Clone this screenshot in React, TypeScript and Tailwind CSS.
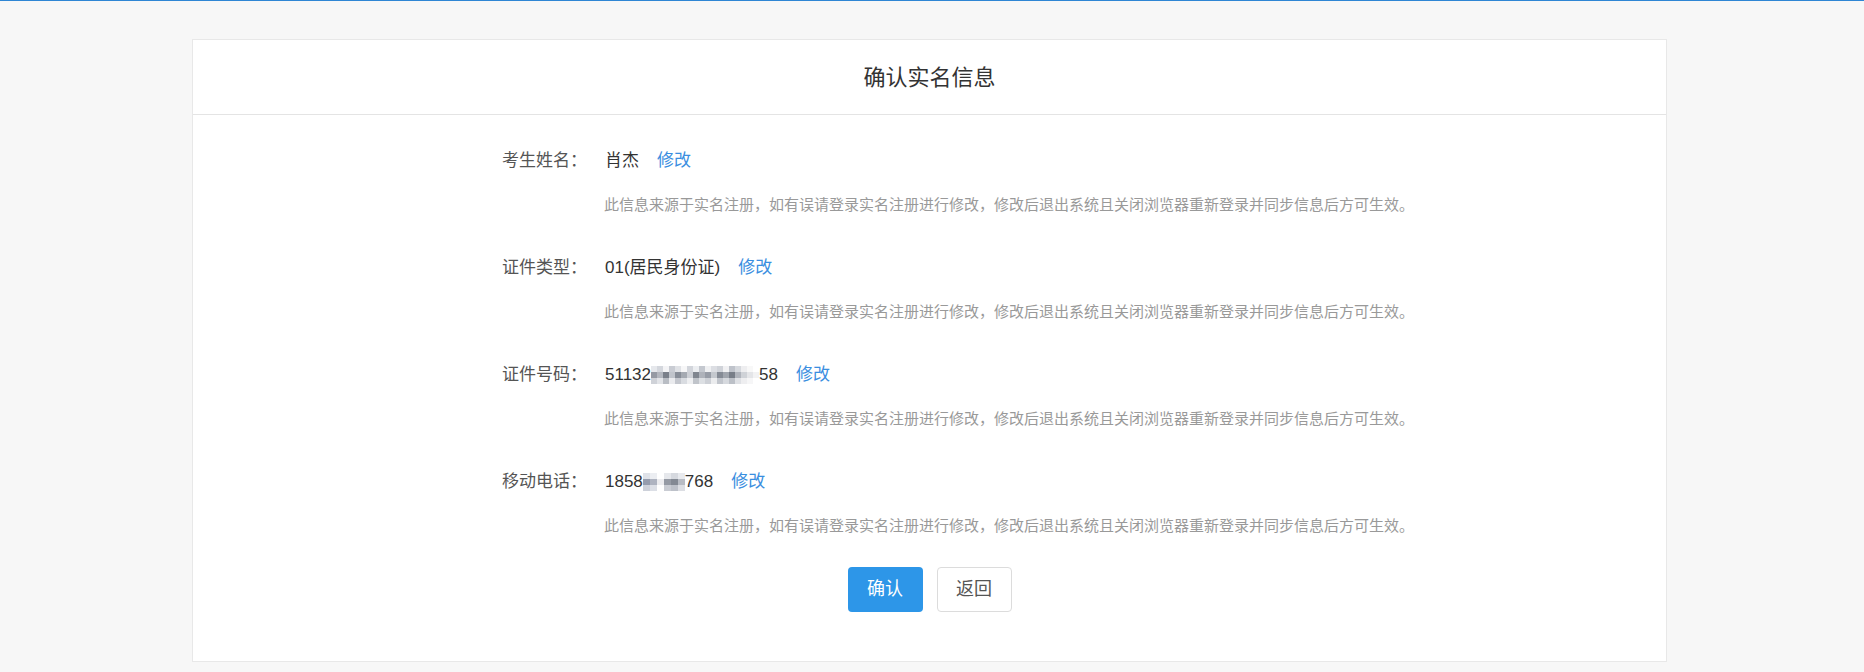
import React from "react";

const idMosaic: string[][] = [
  ["#e6e8ec", "#d4d7dd", "#f4f4f6", "#c9ccd3", "#e0e2e6", "#f7f7f8", "#d2d5db", "#eceef1", "#c4c8cf", "#eff0f2", "#dcdee3", "#d0d3d9", "#f1f1f3", "#bfc3cb", "#d6d9de", "#eeeef0", "#f8f8f8", "#ffffff"],
  ["#959aa4", "#b3b7bf", "#7a808a", "#c0c4cb", "#888e98", "#a5aab2", "#cdd0d6", "#80868f", "#aeb2ba", "#979ca6", "#c4c8ce", "#858b95", "#a0a5ad", "#787e88", "#b0b4bc", "#cfd2d7", "#e4e5e8", "#f2f2f3"],
  ["#cfd2d8", "#e2e4e8", "#b9bdc4", "#eaebee", "#c4c7ce", "#d9dce1", "#eeeff1", "#c0c4ca", "#dcdfe3", "#cdd0d6", "#ebecee", "#c1c5cc", "#d6d9de", "#bcc0c7", "#dfe1e5", "#eeeef0", "#f6f6f7", "#ffffff"],
];

const phoneMosaic: string[][] = [
  ["#dfe2e8", "#eceef2", "#ffffff", "#e6e8ec", "#d6d9df", "#e8eaee"],
  ["#959cad", "#aeb3c0", "#ececef", "#959aa4", "#838993", "#b8bcc4"],
  ["#cdd1da", "#dcdfe6", "#ffffff", "#c9ccd3", "#bdc1c9", "#dcdee3"],
];

function Mosaic({ grid, cell }: { grid: string[][]; cell: "w6" | "w7" }) {
  return (
    <span className="inline-flex flex-col align-middle">
      {grid.map((row, i) => (
        <span key={i} className="flex">
          {row.map((c, j) => (
            <span
              key={j}
              className={cell === "w7" ? "block h-[6px] w-[7px]" : "block h-[6px] w-[6px]"}
              style={{ backgroundColor: c }}
            />
          ))}
        </span>
      ))}
    </span>
  );
}

const NOTE =
  "此信息来源于实名注册，如有误请登录实名注册进行修改，修改后退出系统且关闭浏览器重新登录并同步信息后方可生效。";

function Item({ label, children }: { label: string; children: React.ReactNode }) {
  return (
    <div className="flex flex-col">
      <div className="flex h-6 items-center">
        <div className="w-[103px] shrink-0 text-[17px] leading-6 text-[#555]">{label}</div>
        <div className="flex items-center text-[17px] leading-6 text-[#333]">
          {children}
          <a className="ml-[18px] cursor-pointer text-[#3a8ee0]">修改</a>
        </div>
      </div>
      <div className="mt-[21px] pl-[102px] text-[15px] leading-[22px] text-[#999]">{NOTE}</div>
    </div>
  );
}

export default function App() {
  return (
    <div
      className="min-h-screen bg-[#f7f7f7]"
      style={{ fontFamily: '"Liberation Sans", "Noto Sans CJK SC", sans-serif' }}
    >
      <div className="h-px bg-[#2e86d4]" />
      <div className="pt-[38px]">
        <div className="ml-[192px] w-[1475px] border border-[#e8e8e8] bg-white">
          <div className="flex h-[75px] items-center justify-center border-b border-[#e4e4e4]">
            <h1 className="text-[22px] text-[#333]">确认实名信息</h1>
          </div>
          <div className="pb-[49px] pt-[34px]">
            <div className="flex flex-col gap-10 pl-[309px]">
              <Item label="考生姓名：">
                <span>肖杰</span>
              </Item>
              <Item label="证件类型：">
                <span>01(居民身份证)</span>
              </Item>
              <Item label="证件号码：">
                <span>51132</span>
                <Mosaic grid={idMosaic} cell="w6" />
                <span>58</span>
              </Item>
              <Item label="移动电话：">
                <span>1858</span>
                <Mosaic grid={phoneMosaic} cell="w7" />
                <span>768</span>
              </Item>
            </div>
            <div className="mt-[30px] flex justify-center gap-[14px]">
              <button className="h-[45px] w-[75px] rounded-[4px] bg-[#2d96e8] text-[18px] text-white">
                确认
              </button>
              <button className="h-[45px] w-[75px] rounded-[4px] border border-[#dcdcdc] bg-white text-[18px] text-[#555]">
                返回
              </button>
            </div>
          </div>
        </div>
      </div>
    </div>
  );
}
